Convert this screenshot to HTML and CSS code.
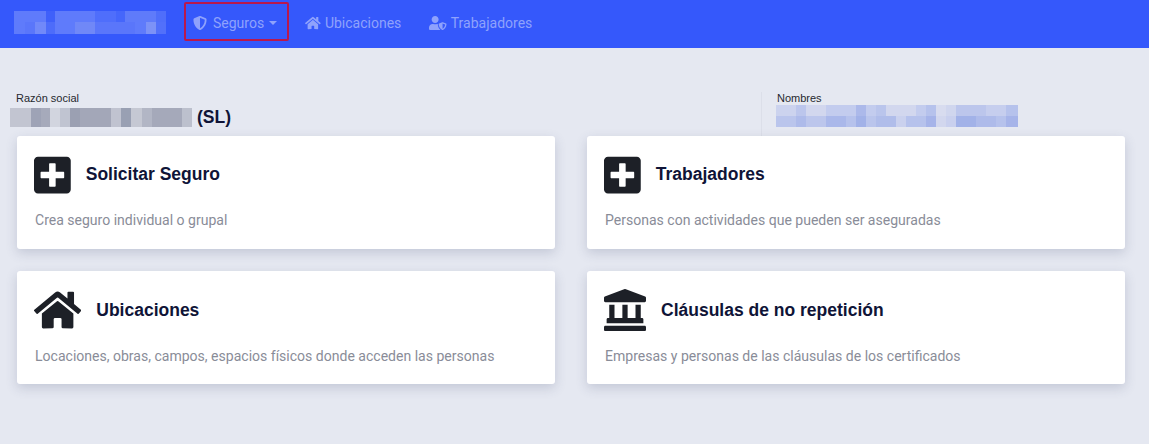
FILE: index.html
```html
<!DOCTYPE html>
<html lang="en">
<head>
  <meta charset="UTF-8">
  <title>Seguros</title>
  <link rel="stylesheet" href="styles.css">
</head>
<body>

  <!-- Top bar -->
  <header class="topbar">
    <div class="logo-blur"></div>
    <nav class="menu">
      <a class="menu-link active">
        <svg class="menu-icon" viewBox="0 0 512 512"><path d="M466.5 83.7l-192-80a48.15 48.15 0 0 0-36.9 0l-192 80C27.7 91.1 16 108.6 16 128c0 198.5 114.5 335.7 221.5 380.3 11.8 4.9 25.1 4.9 36.9 0C360.1 472.6 496 349.3 496 128c0-19.4-11.7-36.9-29.5-44.3zM256.1 446.3l-.1-381 175.9 73.3c-3.3 151.4-82.1 261.1-175.8 307.7z"/></svg>
        Seguros
        <span class="caret"></span>
      </a>
      <a class="menu-link">
        <svg class="menu-icon" viewBox="0 0 576 512"><path d="M280.37 148.26L96 300.11V464a16 16 0 0 0 16 16l112.06-.29a16 16 0 0 0 15.92-16V368a16 16 0 0 1 16-16h64a16 16 0 0 1 16 16v95.64a16 16 0 0 0 16 16.05L464 480a16 16 0 0 0 16-16V300L295.67 148.26a12.19 12.19 0 0 0-15.3 0zM571.6 251.47L488 182.56V44.05a12 12 0 0 0-12-12h-56a12 12 0 0 0-12 12v72.61L318.47 43a48 48 0 0 0-61 0L4.34 251.47a12 12 0 0 0-1.6 16.9l25.5 31A12 12 0 0 0 45.15 301l235.22-193.74a12.19 12.19 0 0 1 15.3 0L530.9 301a12 12 0 0 0 16.9-1.6l25.5-31a12 12 0 0 0-1.7-16.93z"/></svg>
        Ubicaciones
      </a>
      <a class="menu-link">
        <svg class="menu-icon" viewBox="0 0 640 512"><path d="M622.3 271.1l-115.2-45c-4.1-1.6-12.6-3.7-22.2 0l-115.2 45c-10.7 4.2-17.7 14-17.7 24.9 0 111.6 68.7 188.8 132.9 213.9 9.6 3.7 18 1.6 22.2 0C558.4 489.9 640 420.5 640 296c0-10.9-7-20.7-17.7-24.9zM496 462.4V273.3l95.5 37.3c-5.6 87.1-60.9 135.4-95.5 151.8zM224 256c70.7 0 128-57.3 128-128S294.7 0 224 0 96 57.3 96 128s57.3 128 128 128zm96 40c0-2.5.8-4.8 1.1-7.2-2.5-.1-4.9-.8-7.5-.8h-16.7c-22.2 10.2-46.9 16-72.9 16s-50.6-5.8-72.9-16h-16.7C60.2 288 0 348.2 0 422.4V464c0 26.5 21.5 48 48 48h352c6.8 0 13.3-1.5 19.2-4-54-42.9-99.2-116.7-99.2-212z"/></svg>
        Trabajadores
      </a>
    </nav>
  </header>

  <main class="page">
    <!-- Company and user -->
    <section class="info">
      <div class="info-company">
        <div class="info-label">Razón social</div>
        <div class="info-value">
          <div class="company-blur"></div>
          <b>(SL)</b>
        </div>
      </div>
      <div class="info-user">
        <div class="info-label">Nombres</div>
        <div class="user-blur"></div>
      </div>
    </section>

    <!-- Cards -->
    <section class="cards">
      <div class="card">
        <div class="card-head">
          <svg class="card-icon" viewBox="0 0 448 512"><path d="M400 32H48C21.5 32 0 53.5 0 80v352c0 26.5 21.5 48 48 48h352c26.5 0 48-21.5 48-48V80c0-26.5-21.5-48-48-48zm-32 252c0 6.6-5.4 12-12 12h-92v92c0 6.6-5.4 12-12 12h-56c-6.6 0-12-5.4-12-12v-92H92c-6.6 0-12-5.4-12-12v-56c0-6.6 5.4-12 12-12h92v-92c0-6.6 5.4-12 12-12h56c6.6 0 12 5.4 12 12v92h92c6.6 0 12 5.4 12 12v56z"/></svg>
          <h3>Solicitar Seguro</h3>
        </div>
        <p>Crea seguro individual o grupal</p>
      </div>
      <div class="card">
        <div class="card-head">
          <svg class="card-icon" viewBox="0 0 448 512"><path d="M400 32H48C21.5 32 0 53.5 0 80v352c0 26.5 21.5 48 48 48h352c26.5 0 48-21.5 48-48V80c0-26.5-21.5-48-48-48zm-32 252c0 6.6-5.4 12-12 12h-92v92c0 6.6-5.4 12-12 12h-56c-6.6 0-12-5.4-12-12v-92H92c-6.6 0-12-5.4-12-12v-56c0-6.6 5.4-12 12-12h92v-92c0-6.6 5.4-12 12-12h56c6.6 0 12 5.4 12 12v92h92c6.6 0 12 5.4 12 12v56z"/></svg>
          <h3>Trabajadores</h3>
        </div>
        <p>Personas con actividades que pueden ser aseguradas</p>
      </div>
      <div class="card">
        <div class="card-head">
          <svg class="card-icon" viewBox="0 0 576 512"><path d="M280.37 148.26L96 300.11V464a16 16 0 0 0 16 16l112.06-.29a16 16 0 0 0 15.92-16V368a16 16 0 0 1 16-16h64a16 16 0 0 1 16 16v95.64a16 16 0 0 0 16 16.05L464 480a16 16 0 0 0 16-16V300L295.67 148.26a12.19 12.19 0 0 0-15.3 0zM571.6 251.47L488 182.56V44.05a12 12 0 0 0-12-12h-56a12 12 0 0 0-12 12v72.61L318.47 43a48 48 0 0 0-61 0L4.34 251.47a12 12 0 0 0-1.6 16.9l25.5 31A12 12 0 0 0 45.15 301l235.22-193.74a12.19 12.19 0 0 1 15.3 0L530.9 301a12 12 0 0 0 16.9-1.6l25.5-31a12 12 0 0 0-1.7-16.93z"/></svg>
          <h3>Ubicaciones</h3>
        </div>
        <p>Locaciones, obras, campos, espacios físicos donde acceden las personas</p>
      </div>
      <div class="card">
        <div class="card-head">
          <svg class="card-icon" viewBox="0 0 512 512"><path d="M501.62 92.11L267.24 2.04a31.958 31.958 0 0 0-22.47 0L10.38 92.11A16.001 16.001 0 0 0 0 107.09V144c0 8.84 7.16 16 16 16h480c8.84 0 16-7.16 16-16v-36.91c0-6.67-4.14-12.64-10.38-14.98zM64 192v160H48c-8.84 0-16 7.16-16 16v48h448v-48c0-8.84-7.16-16-16-16h-16V192h-64v160h-96V192h-64v160h-96V192H64zm432 256H16c-8.84 0-16 7.16-16 16v32c0 8.84 7.16 16 16 16h480c8.84 0 16-7.16 16-16v-32c0-8.84-7.16-16-16-16z"/></svg>
          <h3>Cláusulas de no repetición</h3>
        </div>
        <p>Empresas y personas de las cláusulas de los certificados</p>
      </div>
    </section>
  </main>

</body>
</html>
```

FILE: styles.css
```css
body {
  margin: 0;
  background-color: #e5e8f1;
  font-family: Roboto, sans-serif;
}

/* Top bar */
.topbar {
  height: 48px;
  background-color: #3558fb;
  display: flex;
}
.logo-blur {
  width: 152px;
  height: 23px;
  margin: 11px 18px 0 14px;
  background-image:
    linear-gradient(90deg, #5f7bfb 0 32px, #3f60fa 32px 41px, #5f7bfb 41px 81px, #4f6efb 81px 102px, #4566fb 102px 111px, #5f7bfa 111px 142px, #4f6efa 142px),
    linear-gradient(90deg, #5f7bfb 0 11px, #5a76fa 11px 21px, #7189f9 21px 32px, #4d6cfa 32px 41px, #5f7bfb 41px 61px, #7088f7 61px 81px, #5a76fa 81px 121px, #5f7bfb 121px 132px, #7c92f7 132px 142px, #5270fa 142px);
  background-size: 100% 11px, 100% 12px;
  background-position: 0 0, 0 11px;
  background-repeat: no-repeat;
}
.menu {
  display: flex;
  gap: 8px;
  padding-top: 2px;
}
.menu-link {
  height: 39px;
  box-sizing: border-box;
  padding: 2px 10px 0 6px;
  border: 2px solid transparent;
  display: flex;
  align-items: center;
  gap: 4px;
  color: #8fa2fc;
  font-size: 14px;
}
.menu-link.active {
  padding-left: 7px;
  border-color: #b9184e;
  border-radius: 2px;
}
.active .menu-icon {
  margin-right: 2px;
}
.menu-icon {
  height: 14px;
  fill: currentColor;
}
.caret {
  width: 0;
  height: 0;
  margin-left: 1px;
  border-top: 4px solid currentColor;
  border-left: 4px solid transparent;
  border-right: 4px solid transparent;
}

/* Company and user */
.page {
  padding: 44px 24px 50px 17px;
}
.info {
  display: flex;
  height: 44px;
}
.info-company {
  width: 744px;
}
.info-user {
  padding-left: 15px;
  border-left: 1px solid #dcdfe9;
}
.info-label {
  font-family: "Liberation Sans", sans-serif;
  font-size: 11px;
  line-height: 13px;
  color: #26282f;
  margin-left: -1px;
}
.info-user .info-label {
  margin-left: 0;
}
.info-value {
  display: flex;
  align-items: center;
  gap: 5px;
  margin-left: -7px;
  margin-top: 2px;
}
.info-value b {
  font-family: "Liberation Sans", sans-serif;
  font-size: 17.5px;
  color: #0f1437;
}
.company-blur {
  width: 182px;
  height: 19px;
  background-image:
    linear-gradient(90deg, #c2c5d1 0 21px, #9ea3b6 21px 31px, #a6aabb 31px 40px, #d2d5df 40px 50px, #c0c4d1 50px 60px, #9ba0b2 60px 70px, #a3a7b8 70px 101px, #c0c3d0 101px 111px, #99a0b3 111px 121px, #c5c8d3 121px 132px, #b2b6c5 132px 142px, #a5a9ba 142px 172px, #bcc0cd 172px);
}
.user-blur {
  width: 242px;
  height: 22px;
  margin-left: -1px;
  background-image:
    linear-gradient(90deg, #ccd3ee 0 20px, #bcc6ec 20px 30px, #d2d7ee 30px 50px, #c3ccee 50px 80px, #acb9ea 80px 90px, #c3ccee 90px 100px, #bac5ec 100px 110px, #d2d7ee 110px 140px, #c3ccee 140px 150px, #b6c2ec 150px 160px, #d8dcef 160px 170px, #d0d6ee 170px 180px, #bcc6ec 180px 210px, #c6ceee 210px 230px, #b6c2ec 230px),
    linear-gradient(90deg, #bac5ec 0 20px, #aebbea 20px 30px, #bcc6ec 30px 50px, #aab8ea 50px 70px, #b6c2ec 70px 80px, #a2b2e8 80px 90px, #bac5ec 90px 100px, #b0bdea 100px 120px, #cad1ee 120px 130px, #b6c2ec 130px 150px, #a6b4e9 150px 160px, #d2d7ee 160px 170px, #c9d0ee 170px 180px, #a2b2e8 180px 200px, #aebbea 200px 220px, #b6c2ec 220px 230px, #a6b4e9 230px);
  background-size: 100% 11px, 100% 11px;
  background-position: 0 0, 0 11px;
  background-repeat: no-repeat;
}

/* Cards */
.cards {
  display: grid;
  grid-template-columns: 1fr 1fr;
  gap: 22.5px 32px;
}
.card {
  background-color: white;
  border-radius: 3px;
  padding: 17.5px 17px 18px;
  box-shadow: 0 4px 12px rgba(60, 70, 110, 0.2);
}
.card:nth-child(n+3) {
  padding-top: 18px;
  padding-bottom: 17px;
}
.card-head {
  display: flex;
  align-items: center;
  gap: 15px;
}
.card-icon {
  height: 42px;
  fill: #1d2027;
  flex-shrink: 0;
}
.card h3 {
  margin: 0;
  font-family: "Liberation Sans", sans-serif;
  font-size: 17.5px;
  font-weight: bold;
  color: #0f1437;
}
.card p {
  margin: 14px 0 0 1px;
  font-size: 14.04px;
  line-height: 21px;
  color: #898c98;
}
.card:nth-child(n+3) p {
  margin-top: 14.5px;
}
```
